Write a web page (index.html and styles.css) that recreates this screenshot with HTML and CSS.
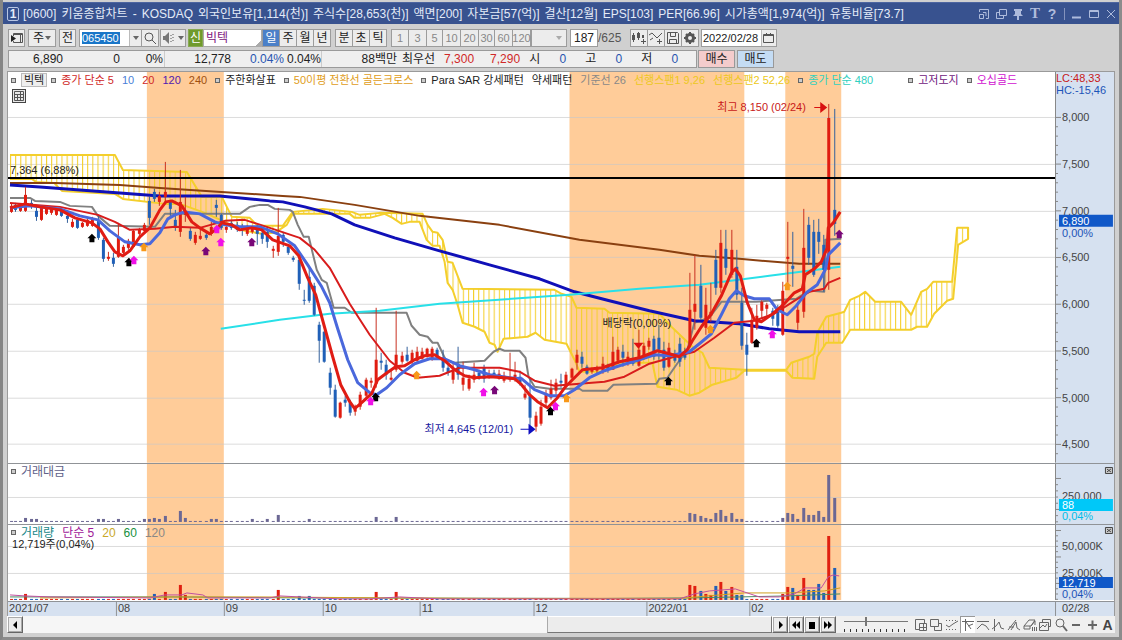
FILE: index.html
```html
<!DOCTYPE html>
<html lang="ko">
<head>
<meta charset="utf-8">
<title>[0600] 키움종합차트</title>
<link rel="stylesheet" href="styles.css">
</head>
<body>
<div class="window">
  <header class="titlebar">
    <span class="badge">1</span>
    <h1 class="title"><span>[0600]</span><span>키움종합차트</span><span>-</span><span>KOSDAQ</span><span>외국인보유[1,114(천)]</span><span>주식수[28,653(천)]</span><span>액면[200]</span><span>자본금[57(억)]</span><span>결산[12월]</span><span>EPS[103]</span><span>PER[66.96]</span><span>시가총액[1,974(억)]</span><span>유통비율[73.7]</span></h1>
    <div class="winbtns">
      <button aria-label="화면 축소"><svg width="12" height="12"><path d="M1.500 4V1.500h9v9H8M1.500 6.500h4v4h-4zM5 4.500h3V8"/></svg></button>
      <button aria-label="화면 복제"><svg width="12" height="12"><path d="M4.500 1.500h7v6h-7zM8.500 8v2.500h-7v-6H4"/></svg></button>
      <button aria-label="고정"><svg width="12" height="12"><path class="solid" d="M2 1h8v2H9v3l2 2H7v4H5V8H1l2-2V3H2z"/></svg></button>
      <button class="serif" aria-label="글꼴">T</button>
      <button class="help" aria-label="도움말">?</button>
      <i class="bar"></i>
      <button aria-label="최소화"><svg width="12" height="12"><path d="M1 9.500h9" stroke-width="2"/></svg></button>
      <button aria-label="최대화"><svg width="12" height="12"><path d="M1.500 2.500h9v7h-9zM2 3.500h8"/></svg></button>
      <button aria-label="닫기"><svg width="12" height="12"><path d="M2 2l8 8M10 2l-8 8"/></svg></button>
    </div>
  </header>

  <div class="toolbar">
    <div class="row">
      <button class="b" aria-label="목록"><svg width="14" height="14"><path d="M3.500 5V2.500h9v9h-9V10M10.500 3v9M4 3.500h9"/><path class="solid" d="M1 4l5 3.500L1 11z"/></svg></button>
      <button class="b combo mid">주<i class="tri"></i></button>
      <button class="b left">전</button>
      <div class="field code"><input aria-label="종목코드" value="065450"><button aria-label="종목 목록"><i class="tri"></i></button></div>
      <button class="b flush" aria-label="검색"><svg width="14" height="14"><circle cx="6" cy="6" r="4"/><path d="M9 9l4 4"/></svg></button>
      <button class="b sound" aria-label="소리"><svg width="14" height="14"><path class="solid" d="M1 5h2l4-4v12l-4-4H1z"/><path d="M9 4v1M9 7v1M9 10v1M11 3v1M11 6v1M11 9v1"/></svg><i class="tri"></i></button>
      <span class="new">신</span><input class="name" aria-label="종목명" value="빅텍">
      <div class="seg"><button class="on">일</button><button>주</button><button>월</button><button>년</button></div>
      <div class="seg"><button>분</button><button>초</button><button>틱</button></div>
      <div class="seg off"><button>1</button><button>3</button><button>5</button><button>10</button><button>20</button><button>30</button><button>60</button><button>120</button></div>
      <button class="b combo wide" aria-label="주기"><i class="tri dim"></i></button>
      <input class="count" aria-label="봉 개수" value="187"><span class="total">/625</span>
      <div class="seg tools">
        <button aria-label="종목 추가"><svg width="16" height="14"><path class="solid" d="M1 4h3v5H1zM6 2h3v5H6zM11 4h2v3h-2z"/><path d="M2.500 2v9M7.500 1v8M12.500 8v5M10 10.500h5"/></svg></button>
        <button aria-label="지표 추가"><svg width="16" height="14"><path d="M1 4l3-2 5 5 5-5M2 9l3-2M11.500 8v5M9 10.500h5"/></svg></button>
        <button aria-label="저장"><svg width="16" height="14"><path d="M2.500 1.500h10l1 1v10h-11zM5.500 1.500v4h5v-4M4.500 12.500v-4h7v4"/></svg></button>
        <button aria-label="설정"><svg width="16" height="14"><circle cx="8" cy="7" r="3.500" stroke-width="3"/><path d="M8 1v2M8 11v2M2 7h2M12 7h2M4 3l1 1M12 3l-1 1M4 11l1-1M12 11l-1-1" stroke-width="2"/></svg></button>
      </div>
      <div class="field date"><input aria-label="날짜" value="2022/02/28"><button aria-label="달력"><svg width="14" height="14"><path d="M1.500 3.500h10v8h-10zM2 4.500h10M4.500 2v3M8.500 2v3"/></svg></button></div>
    </div>
    <div class="row">
      <div class="quote">
        <output class="q1">6,890</output><output class="q2">0</output><output class="q3">0%</output>
        <output class="q4">12,778</output><output class="q5 blue">0.04%</output><output class="q6">0.04%</output>
        <output class="q7">88백만</output><span class="lab">최우선</span><output class="q8 red">7,300</output><output class="q9 red">7,290</output>
        <span class="lab edge">시</span><output class="q10 blue">0</output><span class="lab">고</span><output class="q10 blue">0</output><span class="lab">저</span><output class="q10 blue">0</output>
      </div>
      <button class="order buy">매수</button>
      <button class="order sell">매도</button>
    </div>
  </div>

  <main class="chart">
    <section class="panel">
      <svg class="plot" id="price" viewBox="8 72 1048 391">
        <defs>
          <pattern id="hatch" x="10" y="0" width="5.15" height="10" patternUnits="userSpaceOnUse"><path d="M.5 0V10" stroke="#f4cf2c" stroke-width="1.1"/></pattern>
        </defs>
        <g class="bands"><path d="M147 72h77v391h-77zM570 72h175v391H570zM786 72h56v391h-56z"/></g>
        <path class="grid" d="M8 117.5H1056M8 164.5H1056M8 211.5H1056M8 257.5H1056M8 304.5H1056M8 351.5H1056M8 398.5H1056M8 444.5H1056"/>
        <g class="cloud">
          <path class="fill" d="M10 155H115L123 170 187 172 202 197H222L232 217 250 218 258 226H283L293 212 323 209 352 212 360 215 380 213 423 214 428 225 433 232 438 233 443 240 448 262 453 263 463 289 555 290 562 294 572 297 577 308 605 309 610 313 660 314 672 327 693 347 703 353 710 368 745 370 737 378 713 385 700 393 690 396 677 390 658 387 653 363H620L603 372H580L575 360 567 344 545 340 536 333 528 337 504 339 498 352 495 345 490 343 485 332 475 327 463 323 458 305 453 290 448 283 445 262 440 246H433L427 240 420 222H410L402 224 393 218 385 214 370 218H355L350 214H293L287 225 275 233 262 234 240 230 225 222 205 213 180 204H165L123 199 115 194 62 191 54 183 36 182 32 179H10z"/>
          <path class="fill" d="M787 368L792 363 810 357 815 354 818 333 827 317 842 313 845 312 851 300 860 296 866 292 876 302H902L912 315 922 292 928 289 934 282H953L958 228H969V239L959 245 954 299 948 301 935 314 928 327H918L912 330H851L843 343H827L818 357 815 379 793 378z"/>
          <path d="M10 155H115L123 170 187 172 202 197H222L232 217 250 218 258 226H283L293 212 323 209 352 212 360 215 380 213 423 214 428 225 433 232 438 233 443 240 448 262 453 263 463 289 555 290 562 294 572 297 577 308 605 309 610 313 660 314 672 327 693 347 703 353 710 368 745 370H787L792 363 810 357 815 354 818 333 827 317 842 313 845 312 851 300 860 296 866 292 876 302H902L912 315 922 292 928 289 934 282H953L958 228H969V239L959 245 954 299 948 301 935 314 928 327H918L912 330H851L843 343H827L818 357 815 379 793 378 787 371H745L737 378 713 385 700 393 690 396 677 390 658 387 653 363H620L603 372H580L575 360 567 344 545 340 536 333 528 337 504 339 498 352 495 345 490 343 485 332 475 327 463 323 458 305 453 290 448 283 445 262 440 246H433L427 240 420 222H410L402 224 393 218 385 214 370 218H355L350 214H293L287 225 275 233 262 234 240 230 225 222 205 213 180 204H165L123 199 115 194 62 191 54 183 36 182 32 179H10"/>
        </g>
        <path class="ln kijun" d="M10 198H30L35 201 60 202 70 206 92 207 98 216 110 226 155 227 165 214H240L250 207 260 205H268L275 209 290 210 293 212 298 225 304 237H309L317 270 322 280 327 283 334 308H345L352 313H407L412 326 420 335 428 337 433 343H438L446 360 455 363 485 361 494 352 500 349 505 351H520L526 358 529 377 535 387 550 389H580L583 391H608L614 385 657 384 660 379 668 378 677 365 688 350 695 323 710 318 722 302H757L797 299 803 295 812 291 825 292 826 240 842 239"/>
        <path class="ln ma240" d="M10 183H55L120 185 160 188 283 196 300 197 355 205 420 216 500 225 580 240 660 250 700 256 740 259 800 264H841"/>
        <path class="ln ma120" d="M10 185L40 187 120 193 160 196H220L270 201 283 202 305 207 332 214 355 225 395 238 440 251 490 265 540 279 575 292 610 301 650 311 695 321 740 324 770 329 800 332H841"/>
        <path class="ln ma480" d="M221 329L280 320 330 314 380 311 440 304 570 295 640 289 700 285 770 276 841 267"/>
        <g id="candles"></g>
        <path class="ln ma60" d="M10 203L60 207 98 215 115 222 130 230 155 229 175 227 200 228 225 221 245 220 270 228 300 238 315 250 330 268 350 304 370 335 390 361 405 373 418 378 440 376 460 368H500L520 372 535 381 555 386 580 384 605 382 625 377 650 364 675 357 695 352 715 338 735 323 755 321 775 314 795 301 810 292 825 289 829 283 841 278"/>
        <path class="ln ma20" d="M10 208L30 206 60 209 80 216 98 220 110 231 125 242 140 245 150 244 160 233 168 219 175 215 185 212 200 214 215 222 225 225 240 227H260L278 234 295 246 308 265 322 287 330 303 338 329 348 360 358 383 370 393 377 395 387 388 400 375 415 364 430 359H445L460 366 475 370 490 375 510 378 522 379 535 390 550 396H565L575 390 590 378 605 371 620 366 640 360 655 355 670 356 690 352 700 344 712 334 722 315 730 299 737 291 745 296 755 299H770L778 310 788 315 797 306 807 293 818 285 826 270 829 255 841 243"/>
        <path class="ln ma5" d="M10 208L25 204 40 207 60 210 75 218 92 223 100 229 108 242 115 252 123 256 130 251 140 237 150 228 160 210 166 202 172 201 182 206 192 222 200 228 210 234 217 229 222 223 232 225 240 230 252 228 262 230 273 240 290 246 299 256 308 278 316 295 325 328 333 357 341 385 350 402 355 409 362 403 372 394 378 380 386 374 396 367 405 366 415 360 425 356 435 355 445 361 455 370 465 376 475 378 490 377 505 378 515 379 522 385 530 395 538 402 548 408 558 398 566 387 575 378 583 370 603 368 620 362 640 358 658 351 670 354 680 357 688 350 693 341 702 327 712 314 722 296 732 273 736 269 741 276 748 303 755 320 762 322 772 315 785 304 795 293 803 289 806 275 815 269 822 262 828 248 829 228 834 223 841 212"/>
        <path class="base" d="M8 178H1056"/>
        <g id="marks"></g>
        <path class="down" d="M634 343h10l-5 6z"/>
        <path class="hi" d="M815 107h6v-5l7 5.500-7 5.500v-5h-6z"/>
        <path class="lo" d="M521 429h8v-5l7 5.500-7 5.500v-5h-8z"/>
        <text x="10" y="174">7,364 (6,88%)</text>
        <text class="t-red" x="718" y="111">최고 8,150 (02/24)</text>
        <text class="t-navy" x="425" y="433">최저 4,645 (12/01)</text>
        <text x="603" y="327">배당락(0,00%)</text>
      </svg>
      <svg class="axis" id="axis1" viewBox="1056 72 59 391">
        <text class="t-red" x="1057" y="82">LC:48,33</text><text class="t-blue" x="1057" y="94">HC:-15,46</text>
        <g class="num"><text x="1063" y="121">8,000</text><text x="1063" y="168">7,500</text><text x="1063" y="215">7,000</text><text x="1063" y="261">6,500</text><text x="1063" y="308">6,000</text><text x="1063" y="355">5,500</text><text x="1063" y="402">5,000</text><text x="1063" y="448">4,500</text></g>
        <path class="tag" d="M1060 215h54v12h-54z"/><text class="t-white" x="1063" y="225">6,890</text><text class="t-blue" x="1063" y="237">0,00%</text>
      </svg>
      <div class="legend">
        <i class="sq"></i><button class="chip">빅텍</button><i class="sq"></i><span class="red">종가 단순 5</span><span class="sky">10</span><span class="red">20</span><span class="violet">120</span><span class="brown">240</span><i class="sq"></i><span>주한화살표</span><i class="sq"></i><span class="gold">50이평 전환선 골든크로스</span><i class="sq"></i><span>Para SAR 강세패턴</span><span>약세패턴</span><span class="gray">기준선 26</span><span class="yellow">선행스팬1 9,26</span><span class="yellow">선행스팬2 52,26</span><i class="sq"></i><span class="cyan">종가 단순 480</span><i class="sq far"></i><span class="plum">고저도지</span><i class="sq"></i><span class="pink">오십골드</span>
      </div>
      <button class="gridbtn" aria-label="표 보기"><svg width="12" height="12"><path d="M1.500 1.500h9v9h-9zM1 4.500h10M1 7.500h10M4.500 4v7M7.500 1v10"/></svg></button>
    </section>

    <section class="panel">
      <svg class="plot" viewBox="8 463 1048 61">
        <g class="bands"><path d="M147 463h77v61h-77zM570 463h175v61H570zM786 463h56v61h-56z"/></g>
        <path class="grid" d="M8 497.500H1056"/><path class="frame" d="M8 463.500H1056"/>
        <g id="amount"></g>
      </svg>
      <svg class="axis" id="axis2" viewBox="1056 463 59 61">
        <path class="frame" d="M1056 463.500h59"/>
        <g class="num"><text x="1063" y="500">250,000</text></g>
        <path class="tag aqua" d="M1060 499h54v12h-54z"/><text class="t-white" x="1063" y="509">88</text><text class="t-aqua" x="1063" y="520">0,04%</text>
        <path class="close" d="M1106.500 467.500h7v6h-7zM1108 469l4 3M1112 469l-4 3"/>
      </svg>
      <div class="legend low"><i class="sq"></i><span class="slate">거래대금</span></div>
    </section>

    <section class="panel">
      <svg class="plot" viewBox="8 524 1048 77">
        <g class="bands"><path d="M147 524h77v76h-77zM570 524h175v76H570zM786 524h56v76h-56z"/></g>
        <path class="grid" d="M8 546.500H1056M8 573.500H1056"/><path class="frame" d="M8 524.500H1056"/>
        <g id="volume"></g>
        <path class="vl" stroke="#4a8b62" d="M10 597H180L300 598 600 598.500 690 598 740 597 788 596 841 594"/>
        <path class="vl" stroke="#d0a020" d="M40 598L180 597H260L400 598 500 598.500H680L720 595 745 593H790L825 591 841 588"/>
        <path class="vl" stroke="#c050a0" d="M10 595L25 596 50 597 150 598 165 595 182 595 187 593 203 595 208 598H270L280 596 300 597 340 599H370L400 597 440 599H680L695 594 710 591 736 589 745 592 760 597 780 597 795 594 806 588 822 588 829 577 834 575 840 576"/>
        <text x="12" y="548">12,719주(0,04%)</text>
      </svg>
      <svg class="axis" id="axis3" viewBox="1056 524 59 77">
        <path class="frame" d="M1056 524.500h59"/>
        <g class="num"><text x="1063" y="550">50,000K</text><text x="1063" y="577">25,000K</text></g>
        <path class="tag" d="M1060 577h54v11h-54z"/><text class="t-white" x="1063" y="587">12,719</text><text class="t-blue" x="1063" y="598">0,04%</text>
        <path class="close" d="M1106.500 527.500h7v6h-7zM1108 529l4 3M1112 529l-4 3"/>
      </svg>
      <div class="legend low"><i class="sq"></i><span class="teal">거래량</span><span class="plum2">단순 5</span><span class="khaki">20</span><span class="green">60</span><span class="gray">120</span></div>
    </section>

    <div class="dates">
      <svg viewBox="8 601 1107 16"><path class="frame" d="M8 601.500H1115M116.500 601v16M224.500 601v16M323.500 601v16M420.500 601v16M534.500 601v16M647.500 601v16M750.500 601v16M1056.500 601v16"/>
      <g class="num"><text x="9" y="612">2021/07</text><text x="118" y="612">08</text><text x="226" y="612">09</text><text x="325" y="612">10</text><text x="422" y="612">11</text><text x="536" y="612">12</text><text x="649" y="612">2022/01</text><text x="752" y="612">02</text><text x="1063" y="612">02/28</text></g></svg>
    </div>
  </main>

  <footer class="bottom">
    <button class="raised" aria-label="왼쪽"><svg width="10" height="10"><path class="solid" d="M7 1v8L3 5z"/></svg></button>
    <div class="track"><div class="thumb"></div></div>
    <button class="raised" aria-label="오른쪽"><svg width="10" height="10"><path class="solid" d="M4 1v8l4-4z"/></svg></button>
    <button class="raised" aria-label="뒤로"><svg width="10" height="10"><path class="solid" d="M5 1v8L1 5zM9 1v8L5 5z"/></svg></button>
    <button class="raised" aria-label="정지"><svg width="10" height="10"><path class="solid" d="M2 2h6v7H2z"/></svg></button>
    <button class="raised" aria-label="앞으로"><svg width="10" height="10"><path class="solid" d="M1 1v8l4-4zM5 1v8l4-4z"/></svg></button>
    <input class="slider" type="range" aria-label="속도" min="0" max="30" value="10">
    <div class="icons">
      <button aria-label="창 추가"><svg width="14" height="14"><path d="M1.500 1.500h9v4M5 11.500H1.500v-10M5.500 5.500h7v7h-7zM9.500 6v7M6 9.500h7"/></svg></button>
      <button aria-label="창 겹치기"><svg width="14" height="14"><path d="M1.500 1.500h8v7h-8zM5.500 9v3.500h7v-7H10"/></svg></button>
      <button aria-label="보조선"><svg width="14" height="14"><path d="M1 2.500h12M1 11.500h12" stroke-dasharray="1 2"/><path d="M1 7l3 2 4-3 5-3"/></svg></button>
      <button class="down" aria-label="추세선"><svg width="14" height="14"><path d="M1 3.500h12M4.500 1v12M5 4l5 7M7 8l5-2"/></svg></button>
      <button aria-label="수평선"><svg width="14" height="14"><path d="M1 3.500h12M1 11l5-5 4 2 3 4"/></svg></button>
      <button aria-label="수직선"><svg width="14" height="14"><path d="M3.500 1v12M1 11l4-3 3-4 2 6 3 1"/></svg></button>
      <button aria-label="사선"><svg width="14" height="14"><path d="M1 12L9 2M4 12l5-8 1 6 3 2M2 9h5"/></svg></button>
      <button aria-label="전체 지우기"><svg width="14" height="14"><path d="M1 8l5-6h6l-4 6zM1 8v3h6V8M8 8l4-5v4M9.500 9v4M11.500 9v4M13.500 9v4"/></svg></button>
      <button aria-label="차트 묶음"><svg width="14" height="14"><path d="M4.500 4V1.500h8v7H10M1.500 4.500h9v8h-9zM2 10l3-3 2 2 2-3"/></svg></button>
      <button aria-label="확대경"><svg width="14" height="14"><circle cx="6" cy="5" r="4"/><path d="M9 8l4 5" stroke-width="2"/></svg></button>
      <button aria-label="축소"><svg width="14" height="14"><path d="M3 7h8" stroke-width="2"/></svg></button>
      <button aria-label="확대"><svg width="14" height="14"><path d="M3 7h9M7.500 2.500v9" stroke-width="2"/></svg></button>
      <button class="auto">A</button>
    </div>
  </footer>
</div>
<script src="chart.js"></script>
</body>
</html>
```
FILE: styles.css
```css
:root {
  --ui: "Liberation Sans", "Noto Sans CJK KR", sans-serif;
}
* { box-sizing: border-box; }
body { margin: 0; background: #858585; font: 12px/16px var(--ui); color: #222; }
button, input { font: inherit; color: inherit; margin: 0; padding: 0; border: 0; background: none; border-radius: 0; min-width: 0; }
button { display: flex; align-items: center; justify-content: center; white-space: nowrap; }
svg { display: block; fill: none; stroke: #555; flex: none; }
.solid { fill: currentColor; stroke: none; }
.window { padding: 2px 4px 4px; display: flex; flex-direction: column; background: #d0d0d0; border-left: 3px solid #858585; border-bottom: 5px solid #8c8c8c; border-right: 3px solid #8c8c8c; }

.titlebar { display: flex; align-items: center; gap: 4px; height: 22px; margin: 0 -4px; padding: 0 2px 0 4px; background: #38528f; color: #e4ebf8; border-top: 1px solid #4d65a0; }
.badge { width: 12px; height: 14px; border: 1px solid #b8c6e4; border-radius: 2px; font-weight: bold; line-height: 12px; text-align: center; }
.title { display: flex; gap: 5px; margin: 0; font: inherit; white-space: nowrap; flex: 1; }
.winbtns { display: flex; align-items: center; gap: 5px; color: #aebbdc; }
.winbtns button { width: 12px; height: 14px; }
.winbtns svg { stroke: #aebbdc; }
.winbtns .solid { stroke: none; }
.serif { font: bold 15px "Liberation Serif", serif; }
.help { font-size: 14px; font-weight: bold; }
.bar { width: 1px; height: 12px; margin: 0 1px; background: #8493bd; }

.toolbar { padding: 5px 0 3px 1px; display: flex; flex-direction: column; gap: 3px; }
.row { display: flex; align-items: stretch; height: 18px; }
.row > * { flex: none; }
.b, .seg button { border: 1px solid #9c9c9c; background: #ececec; }
.b { width: 17px; margin-right: 1px; }
.combo { justify-content: space-between; padding: 0 4px; }
.mid { width: 28px; margin: 0 3px 0 2px; }
.wide { width: 36px; justify-content: flex-end; color: #999; }
.tri { border: 3px solid transparent; border-top: 4px solid #666; border-bottom: 0; }
.dim { border-top-color: #aaa; }
.field { display: flex; border: 1px solid #9c9c9c; background: #fff; margin-left: 2px; }
.field input { flex: 1; width: 20px; padding-left: 1px; font-size: 11px; }
.field button { width: 15px; background: #ececec; border-left: 1px solid #bbb; }
.code { width: 63px; }
.field.code input { flex: none; width: 38px; padding: 0; margin: 2px auto 2px 2px; background: #1976c8; color: #fff; }
.field.code button { width: 12px; }
.date { width: 76px; }
.flush { border-left: 0; }
.sound { width: 26px; gap: 2px; margin-right: 2px; color: #777; }
.new { width: 15px; background: #6f9a2c; color: #fff; text-align: center; border: 1px solid #87a852; }
.name { width: 59px; padding-left: 2px; color: #802080; background: linear-gradient(135deg, #fff 92%, #aaa 92%); border: 1px solid #aaa; }
.seg { display: flex; margin-right: 4px; }
.seg button { width: 17px; border-left-width: 0; }
.seg button:first-child { border-left-width: 1px; width: 18px; }
.seg .on { background: #4a80c8; color: #fff; }
.off { color: #888; margin: 0; font-size: 11px; }
.off button, .off button:first-child { width: 18px; }
.off button:nth-child(3n) { width: 16px; }
.count { width: 28px; margin-left: 2px; padding-right: 3px; text-align: right; border: 1px solid #9c9c9c; background: #fff; }
.total { width: 32px; color: #555; line-height: 18px; }
.tools { margin: 0; }
.tools button { color: #555; }

.quote { display: flex; width: 689px; border: 1px solid #9a9a9a; background: #efefef; line-height: 17px; white-space: nowrap; }
.quote output { text-align: right; }
.q1 { width: 54px; } .q2 { width: 57px; } .q3 { width: 45px; border-right: 1px solid #ccc; padding-right: 1px; }
.q4 { width: 66px; } .q5 { width: 53px; } .q6 { width: 38px; border-right: 1px solid #ccc; }
.q7 { width: 75px; } .lab { margin-left: 5px; } .q8 { width: 39px; } .q9 { width: 46px; }
.edge { margin-left: 9px; } .q10 { width: 26px; margin-right: 14px; }
.red { color: #d02828; } .blue { color: #2855b0; }
.order { width: 37px; margin-left: 1px; border: 1px solid #999; }
.buy { background: #f4cccc; } .sell { background: #c4dcf4; margin-left: 2px; }

.chart { border: 1px solid #9a9a9a; border-bottom: 0; background: #fff; }
.panel { position: relative; display: grid; grid-template-columns: 1048fr 59fr; }
.panel > svg, .dates svg { width: 100%; height: auto; }
.axis, .dates svg { background: #d6e1f0; }
text { fill: #222; stroke: none; font: 11px var(--ui); white-space: pre; }
.num text { fill: #444; }
text.t-red { fill: #c81818; } text.t-navy { fill: #1818a0; } text.t-blue { fill: #1c54b8; } text.t-white { fill: #fff; } text.t-aqua { fill: #00bce8; }
.tag { fill: #1058c8; stroke: none; }
.aqua { fill: #00c8f8; }
.bands { fill: #ffcc99; stroke: none; }
.grid { stroke: #c8c8c8; stroke-opacity: .65; }
.frame { stroke: #8f9296; }
.ticks { stroke: #888; }
.cloud { stroke: #f4cf2c; stroke-width: 2; stroke-linejoin: round; }
.cloud .fill { fill: url(#hatch); stroke: none; }
.ln { stroke-linejoin: round; }
.kijun { stroke: #808080; stroke-width: 2; }
.ma5 { stroke: #e01c14; stroke-width: 3; }
.ma20 { stroke: #4a68dc; stroke-width: 3; }
.ma60 { stroke: #d81c1c; stroke-width: 2; }
.ma120 { stroke: #1010b8; stroke-width: 3; }
.ma240 { stroke: #8a4010; stroke-width: 2; }
.ma480 { stroke: #28e0e8; stroke-width: 2; }
.base { stroke: #000; stroke-width: 2; }
.up { stroke: #c83020; fill: #e01c10; } .dn { stroke: #34609c; fill: #2060b8; }
.candle rect { stroke: none; }
path.down { fill: #e01010; stroke: none; } .hi { fill: #d81010; stroke: none; } .lo { fill: #1010c0; stroke: none; }
.vl { stroke-width: 1; }
.close { stroke: #444; fill: #ccc; }

.legend { position: absolute; top: 0; left: 3px; display: flex; align-items: center; gap: 8px; height: 16px; white-space: nowrap; font-size: 11px; }
.low { top: 1px; font-size: 12px; }
.sq { width: 5px; height: 5px; border: 1px solid #666; background: #ccc; margin-right: -3px; }
.far { margin-left: 27px; }
.chip { height: 14px; padding: 0 2px; border: 1px solid #bbb; background: #eee; margin-right: -4px; }
.gridbtn { position: absolute; top: 17px; left: 4px; width: 14px; height: 14px; border: 1px solid #444; background: #e8e8e8; }
.sky { color: #4a80d8; } .violet { color: #5020b0; } .brown { color: #a05010; } .gold { color: #e09c20; } .gray { color: #888; }
.yellow { color: #ecc820; } .cyan { color: #30d0c0; } .plum { color: #702080; } .pink { color: #d010d0; } .slate { color: #606088; }
.teal { color: #208888; } .plum2 { color: #a01898; } .khaki { color: #c8a828; } .green { color: #189040; }

.bottom { display: flex; align-items: stretch; height: 17px; background: #f0f0f0; }
.raised { width: 16px; border: 1px solid #fff; border-right-color: #666; border-bottom-color: #666; background: #ececec; color: #000; box-shadow: 0 0 0 1px #aaa inset; }
.track { flex: 1; display: flex; justify-content: flex-end; background: #f6f6f6; }
.thumb { width: 30%; background: #ececec; border: 1px solid #fff; border-right-color: #777; border-bottom-color: #777; border-left-color: #aaa; }
.slider { appearance: none; width: 64px; margin: 0 5px 0 8px; background: linear-gradient(#777, #777) 0 5px / 100% 1px no-repeat, repeating-linear-gradient(90deg, #333 0 1px, transparent 1px 6px) 0 13px / 100% 3px no-repeat; }
.slider::-webkit-slider-thumb { appearance: none; width: 2px; height: 9px; background: #777; margin-bottom: 6px; }
.icons { display: flex; justify-content: space-between; width: 202px; }
.icons button { width: 15px; color: #444; }
.icons svg { stroke: #666; }
.icons .down { border-left: 1px solid #999; border-top: 1px solid #999; background: #fff; }
.auto { font-weight: bold; font-size: 14px; }
```
FILE: chart.js
```js
// Each candle: x, direction, high, low, body top, body bottom.
const candles = `
11 r 204 213 206 212|15 b 203 212 205 210|20 r 204 212 206 211|25 r 187 212 195 211|31 b 200 209 203 207|36 b 207 221 211 217|41 r 206 221 207 220|46 r 208 215 209 214|51 r 207 215 208 213|56 r 208 216 209 215
61 b 209 217 210 216|67 b 213 223 216 219|72 r 219 228 222 227|77 b 219 229 220 228|82 r 222 228 223 227|87 r 219 227 220 226|92 r 217 227 219 226|98 b 215 240 220 238|103 b 238 262 240 259|108 r 252 261 257 259
113 b 253 267 258 264|118 r 223 258 238 257|123 r 245 255 247 253|128 r 239 250 241 248|133 r 230 247 231 247|139 r 228 236 230 234|144 r 223 233 225 231|149 b 197 225 201 218|154 b 189 202 192 199|159 r 192 206 196 202
165 r 162 202 192 197|170 b 200 218 201 209|175 b 210 231 220 228|180 r 170 237 202 232|185 r 197 222 213 215|190 b 228 241 231 239|195 r 232 245 235 243|200 r 229 240 236 239|206 b 232 240 235 238|211 r 222 236 227 234
216 b 200 217 205 208|221 b 214 230 215 228|226 r 225 233 227 230|231 b 220 230 223 228|237 b 222 232 225 230|242 b 224 236 227 230|247 r 225 236 226 234|252 r 226 234 228 232|257 b 225 245 227 234|262 b 231 244 233 239
267 b 227 248 232 242|273 r 246 258 249 251|278 r 208 256 236 252|283 b 232 247 235 242|288 b 244 255 247 253|293 b 256 262 258 260|299 b 258 290 260 284|304 b 290 305 300 301|309 b 267 303 277 301|314 b 283 316 286 315
319 b 322 363 325 341|324 b 331 363 332 362|330 b 368 395 373 388|335 b 385 418 390 417|340 r 402 419 403 418|345 b 396 407 400 403|350 b 400 416 403 413|355 r 405 416 407 412|360 r 392 410 395 407|366 r 378 400 380 396
371 r 378 388 381 383|376 r 308 388 360 384|381 b 353 370 361 363|386 b 360 380 365 375|391 r 370 381 378 380|396 r 311 372 355 370|402 r 352 364 356 362|407 b 347 362 355 361|412 r 350 366 353 362|417 r 347 363 352 361
422 r 348 360 352 359|427 r 348 358 349 357|432 r 347 361 349 359|437 b 348 360 350 358|443 b 350 372 358 368|448 b 365 376 368 373|453 r 363 384 370 380|458 b 347 380 366 375|463 r 362 391 378 385|469 r 375 391 379 389
474 r 363 383 375 380|479 b 370 380 373 377|484 b 365 383 368 379|489 r 370 379 374 377|494 b 370 378 373 377|499 r 370 380 374 379|504 r 372 383 376 381|510 r 353 382 377 380|515 r 362 382 375 379|520 b 371 386 377 383
525 r 385 400 394 398|530 b 378 426 395 418|536 r 412 432 416 427|541 r 400 426 407 424|546 r 390 407 394 403|551 r 380 400 389 398|556 r 379 395 383 391|561 b 374 388 381 383|566 r 372 388 375 385|572 r 368 380 369 378
577 r 350 370 355 363|582 b 352 368 357 364|587 b 365 375 367 374|592 r 368 374 370 372|597 r 366 374 368 371|603 r 357 374 364 371|608 b 364 373 366 370|613 r 337 370 352 370|618 r 347 364 350 361|623 b 345 367 352 358
628 r 352 366 357 362|633 b 339 366 359 364|639 r 330 367 350 366|644 r 343 360 346 357|649 r 338 350 341 347|654 b 336 360 339 357|659 b 325 360 338 350|664 b 342 371 350 368|669 r 343 368 348 367|675 b 350 363 354 361
680 b 338 367 344 362|685 b 348 360 352 358|690 r 273 348 310 345|695 r 255 330 304 312|701 b 265 320 286 318|706 r 288 335 305 328|711 r 283 322 312 316|716 b 250 295 260 288|721 r 230 293 243 288|726 b 230 275 249 268
732 r 230 278 250 275|737 b 250 300 267 295|742 b 288 350 303 346|747 b 333 376 345 355|752 r 308 344 320 343|757 r 305 330 316 328|762 r 300 318 302 311|767 r 303 316 305 309|773 b 308 326 311 319|778 b 305 328 310 326
783 r 282 336 291 335|788 r 222 290 257 259|793 b 232 287 266 269|798 r 302 330 310 323|804 r 209 318 248 312|809 b 217 265 225 258|814 b 220 277 232 275|819 b 219 254 232 242|824 b 235 292 245 270|829 r 104 290 118 270
835 b 109 236 210 224`.trim().split(/[|\n]/).map(s => s.split(" "));

document.getElementById("candles").innerHTML = candles.map(([x, c, h, l, t, b]) =>
  `<g class="candle ${c === "r" ? "up" : "dn"}"><path d="M${+x + 0.5} ${h}V${l}"/><rect x="${x - 1}" y="${t}" width="3" height="${b - t}"/></g>`).join("");

const marks = {
  "#000": [[92, 238], [129, 262], [376, 397], [551, 411], [669, 381], [757, 343]],
  "#f010e8": [[134, 260], [217, 229], [221, 242], [371, 401], [484, 392], [556, 406], [773, 334]],
  "#780878": [[206, 251], [252, 242], [495, 390], [840, 234]],
  "#f89818": [[144, 247], [417, 375], [567, 398], [711, 329], [788, 286]]
};
document.getElementById("marks").innerHTML = Object.entries(marks).map(([color, list]) =>
  list.map(([x, y]) => `<path fill="${color}" stroke="none" d="M${x} ${y - 4}l4.500 4.500h-2v4h-5v-4h-2z"/>`).join("")).join("");

const amount = { 25: 4, 31: 3, 36: 3, 98: 3, 103: 3, 118: 3, 144: 3, 149: 3, 154: 4, 159: 3, 165: 6, 180: 11, 185: 4, 211: 3, 216: 3, 252: 3, 267: 3, 278: 7, 309: 3, 376: 5, 396: 5, 690: 9, 695: 8, 701: 6, 706: 4, 711: 3, 716: 9, 721: 12, 726: 6, 732: 9, 737: 3, 742: 3, 783: 4, 788: 9, 793: 8, 798: 3, 804: 14, 809: 7, 814: 7, 819: 11, 824: 5, 829: 47, 835: 24 };
const volume = { 25: 6, 154: 6, 165: 8, 180: 15, 185: 5, 278: 10, 299: 4, 309: 4, 376: 8, 396: 8, 690: 15, 695: 14, 701: 9, 706: 6, 711: 5, 716: 14, 721: 18, 726: 9, 732: 13, 737: 5, 742: 5, 783: 6, 788: 13, 793: 12, 798: 5, 804: 22, 809: 10, 814: 10, 819: 16, 824: 7, 829: 64, 835: 32 };
const bars = (data, base, color) => candles.map(c => {
  const h = data[c[0]] || 1;
  return `<rect stroke="none" fill="${color(c)}" x="${c[0] - 1}" width="3" y="${base - h}" height="${h}"/>`;
}).join("");
document.getElementById("amount").innerHTML = bars(amount, 522, () => "#6c6894");
document.getElementById("volume").innerHTML = bars(volume, 600, c => c[1] === "r" ? "#e02010" : "#2060b8");

function ticks(id, top, bottom, start, step) {
  let d = `M1056.500 ${top}V${bottom}`;
  for (let y = start, i = 0; y < bottom; y += step, i++) d += `M1057 ${y.toFixed(1)}h${i % 5 ? 2 : 5}`;
  document.getElementById(id).insertAdjacentHTML("afterbegin", `<path class="ticks" d="${d}"/>`);
}
ticks("axis1", 72, 463, 117.5, 9.35);
ticks("axis2", 463, 524, 478.5, 6.2);
ticks("axis3", 524, 601, 530.5, 5.3);
```
